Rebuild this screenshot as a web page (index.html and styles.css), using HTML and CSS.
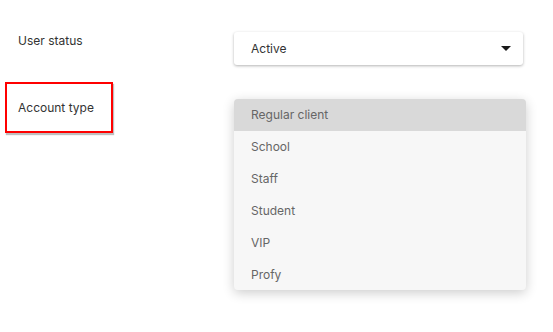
FILE: index.html
```html
<!DOCTYPE html>
<html lang="en">
<head>
  <meta charset="UTF-8">
  <title>User settings</title>
  <link rel="stylesheet" href="styles.css">
</head>
<body>
<div class="settings">
  <div class="field-row">
    <div class="field-label">User status</div>
    <div class="select-box">
      <span>Active</span>
      <span class="caret"></span>
    </div>
  </div>

  <div class="field-row">
    <div class="field-label highlighted">Account type</div>
    <ul class="option-list">
      <li class="option active">Regular client</li>
      <li class="option">School</li>
      <li class="option">Staff</li>
      <li class="option">Student</li>
      <li class="option">VIP</li>
      <li class="option">Profy</li>
    </ul>
  </div>
</div>
</body>
</html>
```

FILE: styles.css
```css
body {
  margin: 0;
  padding: 0;
  min-height: 100vh;
  font-family: 'Inter', 'Noto Sans', sans-serif;
  background-color: #ffffff;
  color: #333333;
}

.settings {
  padding: 32px 0 40px 0;
  display: flex;
  flex-direction: column;
  gap: 17px;
}

.field-row {
  display: grid;
  grid-template-columns: 234px 292px;
  align-items: start;
}

.field-label {
  padding-left: 18px;
  font-size: 12px;
  line-height: 18px;
  color: #333333;
}

.field-label.highlighted {
  justify-self: start;
  margin-left: 5px;
  width: 93px;
  padding: 15px 0 14px 11px;
  border: 2px solid #ff0000;
  box-shadow: 1px 2px 1px rgba(0, 0, 0, 0.25);
}

.select-box {
  width: 289px;
  height: 33px;
  box-sizing: border-box;
  display: flex;
  align-items: center;
  justify-content: space-between;
  padding: 0 12px 0 17px;
  background: #ffffff;
  border-radius: 3px;
  box-shadow: 0 1px 3px rgba(0, 0, 0, 0.3);
  font-size: 12px;
  color: #333333;
}

.caret {
  width: 0;
  height: 0;
  border-left: 5px solid transparent;
  border-right: 5px solid transparent;
  border-top: 5px solid #1a1a1a;
}

.option-list {
  list-style: none;
  margin: 17px 0 0 0;
  padding: 0;
  width: 292px;
  height: 191px;
  background: #f7f7f7;
  border-radius: 4px;
  overflow: hidden;
  box-shadow: 0 3px 12px rgba(0, 0, 0, 0.2);
}

.option {
  height: 32px;
  line-height: 32px;
  padding-left: 17px;
  font-size: 12px;
  color: #666666;
}

.option.active {
  background: #d9d9d9;
}
```
